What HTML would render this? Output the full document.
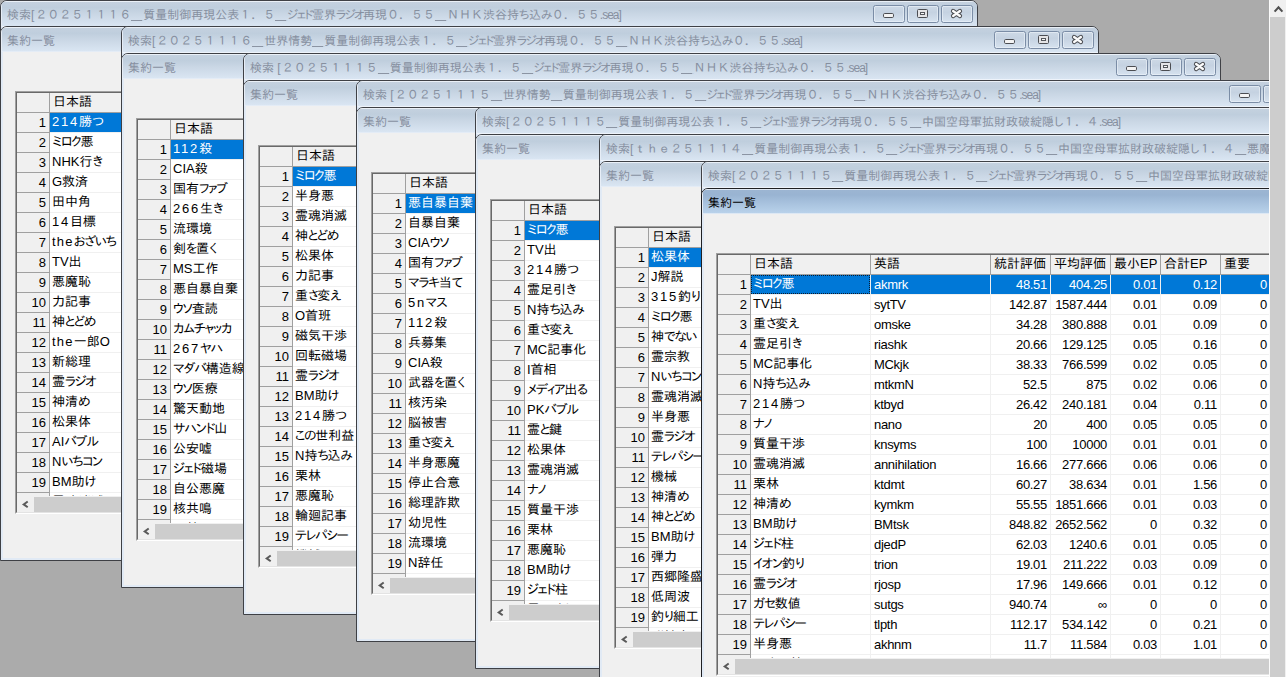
<!DOCTYPE html>
<html lang="ja"><head><meta charset="utf-8"><title>検索</title>
<style>
html,body{margin:0;padding:0}
body{width:1286px;height:677px;overflow:hidden;position:relative;background:#ababab;
 font-family:"Liberation Sans","IPAPGothic","IPAGothic",sans-serif;font-size:13px;color:#000}
i{font-style:normal}
.ot,.iw{position:absolute;box-sizing:border-box;width:978px;border:1px solid #3f4146;border-radius:7px 7px 0 0;overflow:hidden}
.ot{height:40px;background:#dbe6f3}
.iw{height:535px;background:#f0f0f0;border-color:#3e4045}
.iw.act{border-color:#1f2023}
.tb{position:absolute;left:0;top:0;right:0;height:26px;box-sizing:border-box;border-top:1px solid #eaf0f7;border-left:1px solid #e6edf6;
 background:linear-gradient(#c4d1df 0%,#bfcedd 22%,#cad7e5 50%,#d9e5f2 96%,#eef3fa 97%,#eef3fa 100%)}
.iw .tb{height:25px;background:linear-gradient(#c4d1df 0%,#bfcedd 22%,#cad7e5 50%,#d9e5f2 95%,#e4ecf6 96%,#e4ecf6 100%)}
.iw.act .tb{border-top-color:#dfe8f3;background:linear-gradient(#9cb5d2 0%,#99b4d2 20%,#a8c2de 55%,#b8d1ea 95%,#dde8f4 96%,#dde8f4 100%)}
.tt{position:absolute;left:6px;top:6px;font-size:12px;line-height:15px;white-space:nowrap;color:#868f9f}
.iw .tt{left:6px;top:7px}
.iw.act .tt{color:#000}
.fr{position:absolute;left:0;top:25px;right:0;bottom:0;border:2px solid #e1eaf5;border-top:0;pointer-events:none}
.bt{position:absolute;top:4px;width:32px;height:18px;box-sizing:border-box;border:1px solid #7b8da6;border-radius:2.5px;
 background:linear-gradient(#cdd9e6,#c5d2e1 40%,#d6e2ef);box-shadow:inset 0 0 0 1px rgba(240,245,251,.55)}
.ic{position:absolute}
.gd{position:absolute;left:14px;top:64px;width:948px;height:423px;box-sizing:border-box;border:1px solid;border-color:#a0a0a0 #fff #fff #a0a0a0;background:#fff}
.gi{position:absolute;left:0;top:0;right:0;bottom:0;border:1px solid;border-color:#696969 #e3e3e3 #e3e3e3 #696969;overflow:hidden}
.r{position:absolute;left:0;height:20px;width:1400px;white-space:nowrap}
.c{position:absolute;top:0;height:19px;line-height:19px;box-sizing:content-box;border-right:1px solid #f0f0f0;border-bottom:1px solid #f0f0f0;overflow:hidden;white-space:nowrap;background:#fff}
.c.h,.c.n{background:#f0f0f0;border-color:#a0a0a0}
.c.n{left:0;width:29px;padding-right:3px;text-align:right}
.c.j{padding-left:2px;line-height:17px}
.c.h{padding-left:3px;line-height:17px}
.c.n.h{padding-left:0}
.c.e{padding-left:3px;letter-spacing:-.3px}
.c.v{text-align:right;padding-right:3px;letter-spacing:-.3px}
.sel .c.j,.sel .c.e,.sel .c.v{background:#0078d7;color:#fff}
.foc{position:absolute;left:0;top:0;right:0;bottom:0;border:1px dotted #0a1c30}
.d{letter-spacing:1.8px}
.l{letter-spacing:1.2px}
.k{font-family:"IPAPGothic","IPAGothic",sans-serif;letter-spacing:-1.2px}
.g{font-family:"IPAPGothic","IPAGothic",sans-serif;letter-spacing:-1.3px}
.tt{font-family:"Liberation Sans","IPAGothic",sans-serif}
.tk{font-family:"IPAPGothic","IPAGothic",sans-serif;letter-spacing:-1.5px}
.tg{font-family:"IPAPGothic","IPAGothic",sans-serif;letter-spacing:-.5px}
.tl{letter-spacing:-1px}
.tb2{margin-right:1px}
.u{background:linear-gradient(#8d96a5,#8d96a5) no-repeat 0 12px/11px 1px}
.sb{position:absolute;left:0;right:0;bottom:0;height:16px;background:#f0f0f0}
.th{position:absolute;left:17px;top:1px;right:0;height:15px;background:#cdcdcd}
.ar{position:absolute;left:4px;top:3px}
.vs{position:absolute;left:1269px;top:0;width:17px;height:677px;background:#f0f0f0;border-left:1px solid #fbfbfb;box-sizing:border-box}
.vt{position:absolute;left:0;top:17px;width:15px;height:660px;background:#cdcdcd}
</style></head><body>
<div class="ot" style="left:0px;top:0px"><div class="tb"></div><div class="tt">検索<i class="tb2">[</i>２０２５１１１６<i class="u">＿</i>質量制御再現公表１．５<i class="u">＿</i><i class="tk">ジェド</i>霊界<i class="tk">ラジオ</i>再現０．５５<i class="u">＿</i>ＮＨＫ渋谷持<i class="tg">ち</i>込<i class="tg">み</i>０．５５<i class="tl">.sea]</i></div><div class="bt" style="left:872px"><svg class="ic" style="left:8px;top:6px" width="13" height="7" viewBox="0 0 13 7"><rect x="1.5" y="1.5" width="10" height="4" rx="1.2" fill="#f4f4f4" stroke="#4b4d52"/></svg></div><div class="bt" style="left:906px"><svg class="ic" style="left:8px;top:2px" width="13" height="11" viewBox="0 0 13 11"><rect x="1.5" y="1.5" width="10" height="8" rx="1" fill="#e4e4e6" stroke="#4b4d52"/><rect x="4.5" y="4.5" width="4" height="2" fill="#f6f6f6" stroke="#55575c"/></svg></div><div class="bt" style="left:940px"><svg class="ic" style="left:8px;top:2px" width="13" height="11" viewBox="0 0 13 11"><path d="M3.1 3.1 L9.9 7.9 M9.9 3.1 L3.1 7.9" stroke="#4b4d52" stroke-width="4.4" stroke-linecap="round"/><path d="M3.1 3.1 L9.9 7.9 M9.9 3.1 L3.1 7.9" stroke="#fbfbfb" stroke-width="2.4" stroke-linecap="round"/></svg></div></div>
<div class="iw" style="left:0px;top:26px"><div class="tb"></div><div class="tt">集約一覧</div><div class="fr"></div><div class="gd"><div class="gi"><div class="r" style="top:0"><div class="c n h"></div><div class="c h" style="left:33px;width:116px">日本語</div></div><div class="r sel" style="top:20px"><div class="c n">1</div><div class="c j" style="left:33px;width:117px"><i class="d">214</i>勝<i class="g">つ</i></div></div><div class="r" style="top:40px"><div class="c n">2</div><div class="c j" style="left:33px;width:117px"><i class="k">ミロク</i>悪</div></div><div class="r" style="top:60px"><div class="c n">3</div><div class="c j" style="left:33px;width:117px">NHK行<i class="g">き</i></div></div><div class="r" style="top:80px"><div class="c n">4</div><div class="c j" style="left:33px;width:117px">G救済</div></div><div class="r" style="top:100px"><div class="c n">5</div><div class="c j" style="left:33px;width:117px">田中角</div></div><div class="r" style="top:120px"><div class="c n">6</div><div class="c j" style="left:33px;width:117px"><i class="d">14</i>目標</div></div><div class="r" style="top:140px"><div class="c n">7</div><div class="c j" style="left:33px;width:117px"><i class="l">the</i><i class="g">おざいち</i></div></div><div class="r" style="top:160px"><div class="c n">8</div><div class="c j" style="left:33px;width:117px">TV出</div></div><div class="r" style="top:180px"><div class="c n">9</div><div class="c j" style="left:33px;width:117px">悪魔恥</div></div><div class="r" style="top:200px"><div class="c n">10</div><div class="c j" style="left:33px;width:117px">力記事</div></div><div class="r" style="top:220px"><div class="c n">11</div><div class="c j" style="left:33px;width:117px">神<i class="g">とどめ</i></div></div><div class="r" style="top:240px"><div class="c n">12</div><div class="c j" style="left:33px;width:117px"><i class="l">the</i>一郎O</div></div><div class="r" style="top:260px"><div class="c n">13</div><div class="c j" style="left:33px;width:117px">新総理</div></div><div class="r" style="top:280px"><div class="c n">14</div><div class="c j" style="left:33px;width:117px">霊<i class="k">ラジオ</i></div></div><div class="r" style="top:300px"><div class="c n">15</div><div class="c j" style="left:33px;width:117px">神清<i class="g">め</i></div></div><div class="r" style="top:320px"><div class="c n">16</div><div class="c j" style="left:33px;width:117px">松果体</div></div><div class="r" style="top:340px"><div class="c n">17</div><div class="c j" style="left:33px;width:117px">AI<i class="k">バブル</i></div></div><div class="r" style="top:360px"><div class="c n">18</div><div class="c j" style="left:33px;width:117px">N<i class="g">いち</i><i class="k">コン</i></div></div><div class="r" style="top:380px"><div class="c n">19</div><div class="c j" style="left:33px;width:117px">BM助<i class="g">け</i></div></div><div class="r" style="top:400px"><div class="c n">20</div><div class="c j" style="left:33px;width:117px">霊魂消滅</div></div><div class="sb"><svg class="ar" width="9" height="10" viewBox="0 0 9 10"><path d="M6.7 2.5 L2.7 5.4 L6.7 8.3" fill="none" stroke="#5a5a5a" stroke-width="2"/></svg><div class="th"></div></div></div></div></div>
<div class="ot" style="left:121px;top:26px"><div class="tb"></div><div class="tt">検索<i class="tb2">[</i>２０２５１１１６<i class="u">＿</i>世界情勢<i class="u">＿</i>質量制御再現公表１．５<i class="u">＿</i><i class="tk">ジェド</i>霊界<i class="tk">ラジオ</i>再現０．５５<i class="u">＿</i>ＮＨＫ渋谷持<i class="tg">ち</i>込<i class="tg">み</i>０．５５<i class="tl">.sea]</i></div><div class="bt" style="left:872px"><svg class="ic" style="left:8px;top:6px" width="13" height="7" viewBox="0 0 13 7"><rect x="1.5" y="1.5" width="10" height="4" rx="1.2" fill="#f4f4f4" stroke="#4b4d52"/></svg></div><div class="bt" style="left:906px"><svg class="ic" style="left:8px;top:2px" width="13" height="11" viewBox="0 0 13 11"><rect x="1.5" y="1.5" width="10" height="8" rx="1" fill="#e4e4e6" stroke="#4b4d52"/><rect x="4.5" y="4.5" width="4" height="2" fill="#f6f6f6" stroke="#55575c"/></svg></div><div class="bt" style="left:940px"><svg class="ic" style="left:8px;top:2px" width="13" height="11" viewBox="0 0 13 11"><path d="M3.1 3.1 L9.9 7.9 M9.9 3.1 L3.1 7.9" stroke="#4b4d52" stroke-width="4.4" stroke-linecap="round"/><path d="M3.1 3.1 L9.9 7.9 M9.9 3.1 L3.1 7.9" stroke="#fbfbfb" stroke-width="2.4" stroke-linecap="round"/></svg></div></div>
<div class="iw" style="left:121px;top:53px"><div class="tb"></div><div class="tt">集約一覧</div><div class="fr"></div><div class="gd"><div class="gi"><div class="r" style="top:0"><div class="c n h"></div><div class="c h" style="left:33px;width:116px">日本語</div></div><div class="r sel" style="top:20px"><div class="c n">1</div><div class="c j" style="left:33px;width:117px"><i class="d">112</i>殺</div></div><div class="r" style="top:40px"><div class="c n">2</div><div class="c j" style="left:33px;width:117px">CIA殺</div></div><div class="r" style="top:60px"><div class="c n">3</div><div class="c j" style="left:33px;width:117px">国有<i class="k">ファブ</i></div></div><div class="r" style="top:80px"><div class="c n">4</div><div class="c j" style="left:33px;width:117px"><i class="d">266</i>生<i class="g">き</i></div></div><div class="r" style="top:100px"><div class="c n">5</div><div class="c j" style="left:33px;width:117px">流環境</div></div><div class="r" style="top:120px"><div class="c n">6</div><div class="c j" style="left:33px;width:117px">剣<i class="g">を</i>置<i class="g">く</i></div></div><div class="r" style="top:140px"><div class="c n">7</div><div class="c j" style="left:33px;width:117px">MS工作</div></div><div class="r" style="top:160px"><div class="c n">8</div><div class="c j" style="left:33px;width:117px">悪自暴自棄</div></div><div class="r" style="top:180px"><div class="c n">9</div><div class="c j" style="left:33px;width:117px"><i class="k">ウソ</i>査読</div></div><div class="r" style="top:200px"><div class="c n">10</div><div class="c j" style="left:33px;width:117px"><i class="k">カムチャッカ</i></div></div><div class="r" style="top:220px"><div class="c n">11</div><div class="c j" style="left:33px;width:117px"><i class="d">267</i><i class="k">ヤハ</i></div></div><div class="r" style="top:240px"><div class="c n">12</div><div class="c j" style="left:33px;width:117px"><i class="k">マダバ</i>構造線</div></div><div class="r" style="top:260px"><div class="c n">13</div><div class="c j" style="left:33px;width:117px"><i class="k">ウソ</i>医療</div></div><div class="r" style="top:280px"><div class="c n">14</div><div class="c j" style="left:33px;width:117px">驚天動地</div></div><div class="r" style="top:300px"><div class="c n">15</div><div class="c j" style="left:33px;width:117px"><i class="k">サハンド</i>山</div></div><div class="r" style="top:320px"><div class="c n">16</div><div class="c j" style="left:33px;width:117px">公安嘘</div></div><div class="r" style="top:340px"><div class="c n">17</div><div class="c j" style="left:33px;width:117px"><i class="k">ジェド</i>磁場</div></div><div class="r" style="top:360px"><div class="c n">18</div><div class="c j" style="left:33px;width:117px">自公悪魔</div></div><div class="r" style="top:380px"><div class="c n">19</div><div class="c j" style="left:33px;width:117px">核共鳴</div></div><div class="r" style="top:400px"><div class="c n">20</div><div class="c j" style="left:33px;width:117px">栗林</div></div><div class="sb"><svg class="ar" width="9" height="10" viewBox="0 0 9 10"><path d="M6.7 2.5 L2.7 5.4 L6.7 8.3" fill="none" stroke="#5a5a5a" stroke-width="2"/></svg><div class="th"></div></div></div></div></div>
<div class="ot" style="left:243px;top:53px"><div class="tb"></div><div class="tt">検索 <i class="tb2">[</i>２０２５１１１５<i class="u">＿</i>質量制御再現公表１．５<i class="u">＿</i><i class="tk">ジェド</i>霊界<i class="tk">ラジオ</i>再現０．５５<i class="u">＿</i>ＮＨＫ渋谷持<i class="tg">ち</i>込<i class="tg">み</i>０．５５<i class="tl">.sea]</i></div><div class="bt" style="left:872px"><svg class="ic" style="left:8px;top:6px" width="13" height="7" viewBox="0 0 13 7"><rect x="1.5" y="1.5" width="10" height="4" rx="1.2" fill="#f4f4f4" stroke="#4b4d52"/></svg></div><div class="bt" style="left:906px"><svg class="ic" style="left:8px;top:2px" width="13" height="11" viewBox="0 0 13 11"><rect x="1.5" y="1.5" width="10" height="8" rx="1" fill="#e4e4e6" stroke="#4b4d52"/><rect x="4.5" y="4.5" width="4" height="2" fill="#f6f6f6" stroke="#55575c"/></svg></div><div class="bt" style="left:940px"><svg class="ic" style="left:8px;top:2px" width="13" height="11" viewBox="0 0 13 11"><path d="M3.1 3.1 L9.9 7.9 M9.9 3.1 L3.1 7.9" stroke="#4b4d52" stroke-width="4.4" stroke-linecap="round"/><path d="M3.1 3.1 L9.9 7.9 M9.9 3.1 L3.1 7.9" stroke="#fbfbfb" stroke-width="2.4" stroke-linecap="round"/></svg></div></div>
<div class="iw" style="left:243px;top:80px"><div class="tb"></div><div class="tt">集約一覧</div><div class="fr"></div><div class="gd"><div class="gi"><div class="r" style="top:0"><div class="c n h"></div><div class="c h" style="left:33px;width:116px">日本語</div></div><div class="r sel" style="top:20px"><div class="c n">1</div><div class="c j" style="left:33px;width:117px"><i class="k">ミロク</i>悪</div></div><div class="r" style="top:40px"><div class="c n">2</div><div class="c j" style="left:33px;width:117px">半身悪</div></div><div class="r" style="top:60px"><div class="c n">3</div><div class="c j" style="left:33px;width:117px">霊魂消滅</div></div><div class="r" style="top:80px"><div class="c n">4</div><div class="c j" style="left:33px;width:117px">神<i class="g">とどめ</i></div></div><div class="r" style="top:100px"><div class="c n">5</div><div class="c j" style="left:33px;width:117px">松果体</div></div><div class="r" style="top:120px"><div class="c n">6</div><div class="c j" style="left:33px;width:117px">力記事</div></div><div class="r" style="top:140px"><div class="c n">7</div><div class="c j" style="left:33px;width:117px">重<i class="g">さ</i>変<i class="g">え</i></div></div><div class="r" style="top:160px"><div class="c n">8</div><div class="c j" style="left:33px;width:117px">O首班</div></div><div class="r" style="top:180px"><div class="c n">9</div><div class="c j" style="left:33px;width:117px">磁気干渉</div></div><div class="r" style="top:200px"><div class="c n">10</div><div class="c j" style="left:33px;width:117px">回転磁場</div></div><div class="r" style="top:220px"><div class="c n">11</div><div class="c j" style="left:33px;width:117px">霊<i class="k">ラジオ</i></div></div><div class="r" style="top:240px"><div class="c n">12</div><div class="c j" style="left:33px;width:117px">BM助<i class="g">け</i></div></div><div class="r" style="top:260px"><div class="c n">13</div><div class="c j" style="left:33px;width:117px"><i class="d">214</i>勝<i class="g">つ</i></div></div><div class="r" style="top:280px"><div class="c n">14</div><div class="c j" style="left:33px;width:117px"><i class="g">この</i>世利益</div></div><div class="r" style="top:300px"><div class="c n">15</div><div class="c j" style="left:33px;width:117px">N持<i class="g">ち</i>込<i class="g">み</i></div></div><div class="r" style="top:320px"><div class="c n">16</div><div class="c j" style="left:33px;width:117px">栗林</div></div><div class="r" style="top:340px"><div class="c n">17</div><div class="c j" style="left:33px;width:117px">悪魔恥</div></div><div class="r" style="top:360px"><div class="c n">18</div><div class="c j" style="left:33px;width:117px">輪廻記事</div></div><div class="r" style="top:380px"><div class="c n">19</div><div class="c j" style="left:33px;width:117px"><i class="k">テレパシー</i></div></div><div class="r" style="top:400px"><div class="c n">20</div><div class="c j" style="left:33px;width:117px">機械</div></div><div class="sb"><svg class="ar" width="9" height="10" viewBox="0 0 9 10"><path d="M6.7 2.5 L2.7 5.4 L6.7 8.3" fill="none" stroke="#5a5a5a" stroke-width="2"/></svg><div class="th"></div></div></div></div></div>
<div class="ot" style="left:356px;top:80px"><div class="tb"></div><div class="tt">検索 <i class="tb2">[</i>２０２５１１１５<i class="u">＿</i>世界情勢<i class="u">＿</i>質量制御再現公表１．５<i class="u">＿</i><i class="tk">ジェド</i>霊界<i class="tk">ラジオ</i>再現０．５５<i class="u">＿</i>ＮＨＫ渋谷持<i class="tg">ち</i>込<i class="tg">み</i>０．５５<i class="tl">.sea]</i></div><div class="bt" style="left:872px"><svg class="ic" style="left:8px;top:6px" width="13" height="7" viewBox="0 0 13 7"><rect x="1.5" y="1.5" width="10" height="4" rx="1.2" fill="#f4f4f4" stroke="#4b4d52"/></svg></div><div class="bt" style="left:906px"><svg class="ic" style="left:8px;top:2px" width="13" height="11" viewBox="0 0 13 11"><rect x="1.5" y="1.5" width="10" height="8" rx="1" fill="#e4e4e6" stroke="#4b4d52"/><rect x="4.5" y="4.5" width="4" height="2" fill="#f6f6f6" stroke="#55575c"/></svg></div><div class="bt" style="left:940px"><svg class="ic" style="left:8px;top:2px" width="13" height="11" viewBox="0 0 13 11"><path d="M3.1 3.1 L9.9 7.9 M9.9 3.1 L3.1 7.9" stroke="#4b4d52" stroke-width="4.4" stroke-linecap="round"/><path d="M3.1 3.1 L9.9 7.9 M9.9 3.1 L3.1 7.9" stroke="#fbfbfb" stroke-width="2.4" stroke-linecap="round"/></svg></div></div>
<div class="iw" style="left:356px;top:107px"><div class="tb"></div><div class="tt">集約一覧</div><div class="fr"></div><div class="gd"><div class="gi"><div class="r" style="top:0"><div class="c n h"></div><div class="c h" style="left:33px;width:116px">日本語</div></div><div class="r sel" style="top:20px"><div class="c n">1</div><div class="c j" style="left:33px;width:117px">悪自暴自棄</div></div><div class="r" style="top:40px"><div class="c n">2</div><div class="c j" style="left:33px;width:117px">自暴自棄</div></div><div class="r" style="top:60px"><div class="c n">3</div><div class="c j" style="left:33px;width:117px">CIA<i class="k">ウソ</i></div></div><div class="r" style="top:80px"><div class="c n">4</div><div class="c j" style="left:33px;width:117px">国有<i class="k">ファブ</i></div></div><div class="r" style="top:100px"><div class="c n">5</div><div class="c j" style="left:33px;width:117px"><i class="k">マラキ</i>当<i class="g">て</i></div></div><div class="r" style="top:120px"><div class="c n">6</div><div class="c j" style="left:33px;width:117px"><i class="d">5</i><i class="l">n</i><i class="k">マス</i></div></div><div class="r" style="top:140px"><div class="c n">7</div><div class="c j" style="left:33px;width:117px"><i class="d">112</i>殺</div></div><div class="r" style="top:160px"><div class="c n">8</div><div class="c j" style="left:33px;width:117px">兵募集</div></div><div class="r" style="top:180px"><div class="c n">9</div><div class="c j" style="left:33px;width:117px">CIA殺</div></div><div class="r" style="top:200px"><div class="c n">10</div><div class="c j" style="left:33px;width:117px">武器<i class="g">を</i>置<i class="g">く</i></div></div><div class="r" style="top:220px"><div class="c n">11</div><div class="c j" style="left:33px;width:117px">核汚染</div></div><div class="r" style="top:240px"><div class="c n">12</div><div class="c j" style="left:33px;width:117px">脳被害</div></div><div class="r" style="top:260px"><div class="c n">13</div><div class="c j" style="left:33px;width:117px">重<i class="g">さ</i>変<i class="g">え</i></div></div><div class="r" style="top:280px"><div class="c n">14</div><div class="c j" style="left:33px;width:117px">半身悪魔</div></div><div class="r" style="top:300px"><div class="c n">15</div><div class="c j" style="left:33px;width:117px">停止合意</div></div><div class="r" style="top:320px"><div class="c n">16</div><div class="c j" style="left:33px;width:117px">総理詐欺</div></div><div class="r" style="top:340px"><div class="c n">17</div><div class="c j" style="left:33px;width:117px">幼児性</div></div><div class="r" style="top:360px"><div class="c n">18</div><div class="c j" style="left:33px;width:117px">流環境</div></div><div class="r" style="top:380px"><div class="c n">19</div><div class="c j" style="left:33px;width:117px">N辞任</div></div><div class="r" style="top:400px"><div class="c n">20</div><div class="c j" style="left:33px;width:117px"></div></div><div class="sb"><svg class="ar" width="9" height="10" viewBox="0 0 9 10"><path d="M6.7 2.5 L2.7 5.4 L6.7 8.3" fill="none" stroke="#5a5a5a" stroke-width="2"/></svg><div class="th"></div></div></div></div></div>
<div class="ot" style="left:475px;top:107px"><div class="tb"></div><div class="tt">検索<i class="tb2">[</i>２０２５１１１５<i class="u">＿</i>質量制御再現公表１．５<i class="u">＿</i><i class="tk">ジェド</i>霊界<i class="tk">ラジオ</i>再現０．５５<i class="u">＿</i>中国空母軍拡財政破綻隠<i class="tg">し</i>１．４<i class="tl">.sea]</i></div><div class="bt" style="left:872px"><svg class="ic" style="left:8px;top:6px" width="13" height="7" viewBox="0 0 13 7"><rect x="1.5" y="1.5" width="10" height="4" rx="1.2" fill="#f4f4f4" stroke="#4b4d52"/></svg></div><div class="bt" style="left:906px"><svg class="ic" style="left:8px;top:2px" width="13" height="11" viewBox="0 0 13 11"><rect x="1.5" y="1.5" width="10" height="8" rx="1" fill="#e4e4e6" stroke="#4b4d52"/><rect x="4.5" y="4.5" width="4" height="2" fill="#f6f6f6" stroke="#55575c"/></svg></div><div class="bt" style="left:940px"><svg class="ic" style="left:8px;top:2px" width="13" height="11" viewBox="0 0 13 11"><path d="M3.1 3.1 L9.9 7.9 M9.9 3.1 L3.1 7.9" stroke="#4b4d52" stroke-width="4.4" stroke-linecap="round"/><path d="M3.1 3.1 L9.9 7.9 M9.9 3.1 L3.1 7.9" stroke="#fbfbfb" stroke-width="2.4" stroke-linecap="round"/></svg></div></div>
<div class="iw" style="left:475px;top:134px"><div class="tb"></div><div class="tt">集約一覧</div><div class="fr"></div><div class="gd"><div class="gi"><div class="r" style="top:0"><div class="c n h"></div><div class="c h" style="left:33px;width:116px">日本語</div></div><div class="r sel" style="top:20px"><div class="c n">1</div><div class="c j" style="left:33px;width:117px"><i class="k">ミロク</i>悪</div></div><div class="r" style="top:40px"><div class="c n">2</div><div class="c j" style="left:33px;width:117px">TV出</div></div><div class="r" style="top:60px"><div class="c n">3</div><div class="c j" style="left:33px;width:117px"><i class="d">214</i>勝<i class="g">つ</i></div></div><div class="r" style="top:80px"><div class="c n">4</div><div class="c j" style="left:33px;width:117px">霊足引<i class="g">き</i></div></div><div class="r" style="top:100px"><div class="c n">5</div><div class="c j" style="left:33px;width:117px">N持<i class="g">ち</i>込<i class="g">み</i></div></div><div class="r" style="top:120px"><div class="c n">6</div><div class="c j" style="left:33px;width:117px">重<i class="g">さ</i>変<i class="g">え</i></div></div><div class="r" style="top:140px"><div class="c n">7</div><div class="c j" style="left:33px;width:117px">MC記事化</div></div><div class="r" style="top:160px"><div class="c n">8</div><div class="c j" style="left:33px;width:117px">I首相</div></div><div class="r" style="top:180px"><div class="c n">9</div><div class="c j" style="left:33px;width:117px"><i class="k">メディア</i>出<i class="g">る</i></div></div><div class="r" style="top:200px"><div class="c n">10</div><div class="c j" style="left:33px;width:117px">PK<i class="k">バブル</i></div></div><div class="r" style="top:220px"><div class="c n">11</div><div class="c j" style="left:33px;width:117px">霊<i class="g">と</i>鍵</div></div><div class="r" style="top:240px"><div class="c n">12</div><div class="c j" style="left:33px;width:117px">松果体</div></div><div class="r" style="top:260px"><div class="c n">13</div><div class="c j" style="left:33px;width:117px">霊魂消滅</div></div><div class="r" style="top:280px"><div class="c n">14</div><div class="c j" style="left:33px;width:117px"><i class="k">ナノ</i></div></div><div class="r" style="top:300px"><div class="c n">15</div><div class="c j" style="left:33px;width:117px">質量干渉</div></div><div class="r" style="top:320px"><div class="c n">16</div><div class="c j" style="left:33px;width:117px">栗林</div></div><div class="r" style="top:340px"><div class="c n">17</div><div class="c j" style="left:33px;width:117px">悪魔恥</div></div><div class="r" style="top:360px"><div class="c n">18</div><div class="c j" style="left:33px;width:117px">BM助<i class="g">け</i></div></div><div class="r" style="top:380px"><div class="c n">19</div><div class="c j" style="left:33px;width:117px"><i class="k">ジェド</i>柱</div></div><div class="r" style="top:400px"><div class="c n">20</div><div class="c j" style="left:33px;width:117px">霊<i class="k">ラジオ</i></div></div><div class="sb"><svg class="ar" width="9" height="10" viewBox="0 0 9 10"><path d="M6.7 2.5 L2.7 5.4 L6.7 8.3" fill="none" stroke="#5a5a5a" stroke-width="2"/></svg><div class="th"></div></div></div></div></div>
<div class="ot" style="left:599px;top:134px"><div class="tb"></div><div class="tt">検索<i class="tb2">[</i>ｔｈｅ２５１１１４<i class="u">＿</i>質量制御再現公表１．５<i class="u">＿</i><i class="tk">ジェド</i>霊界<i class="tk">ラジオ</i>再現０．５５<i class="u">＿</i>中国空母軍拡財政破綻隠<i class="tg">し</i>１．４<i class="u">＿</i>悪魔恥<i class="tl">.sea]</i></div><div class="bt" style="left:872px"><svg class="ic" style="left:8px;top:6px" width="13" height="7" viewBox="0 0 13 7"><rect x="1.5" y="1.5" width="10" height="4" rx="1.2" fill="#f4f4f4" stroke="#4b4d52"/></svg></div><div class="bt" style="left:906px"><svg class="ic" style="left:8px;top:2px" width="13" height="11" viewBox="0 0 13 11"><rect x="1.5" y="1.5" width="10" height="8" rx="1" fill="#e4e4e6" stroke="#4b4d52"/><rect x="4.5" y="4.5" width="4" height="2" fill="#f6f6f6" stroke="#55575c"/></svg></div><div class="bt" style="left:940px"><svg class="ic" style="left:8px;top:2px" width="13" height="11" viewBox="0 0 13 11"><path d="M3.1 3.1 L9.9 7.9 M9.9 3.1 L3.1 7.9" stroke="#4b4d52" stroke-width="4.4" stroke-linecap="round"/><path d="M3.1 3.1 L9.9 7.9 M9.9 3.1 L3.1 7.9" stroke="#fbfbfb" stroke-width="2.4" stroke-linecap="round"/></svg></div></div>
<div class="iw" style="left:599px;top:161px"><div class="tb"></div><div class="tt">集約一覧</div><div class="fr"></div><div class="gd"><div class="gi"><div class="r" style="top:0"><div class="c n h"></div><div class="c h" style="left:33px;width:116px">日本語</div></div><div class="r sel" style="top:20px"><div class="c n">1</div><div class="c j" style="left:33px;width:117px">松果体</div></div><div class="r" style="top:40px"><div class="c n">2</div><div class="c j" style="left:33px;width:117px">J解説</div></div><div class="r" style="top:60px"><div class="c n">3</div><div class="c j" style="left:33px;width:117px"><i class="d">315</i>釣<i class="g">り</i></div></div><div class="r" style="top:80px"><div class="c n">4</div><div class="c j" style="left:33px;width:117px"><i class="k">ミロク</i>悪</div></div><div class="r" style="top:100px"><div class="c n">5</div><div class="c j" style="left:33px;width:117px">神<i class="g">でない</i></div></div><div class="r" style="top:120px"><div class="c n">6</div><div class="c j" style="left:33px;width:117px">霊宗教</div></div><div class="r" style="top:140px"><div class="c n">7</div><div class="c j" style="left:33px;width:117px">N<i class="g">いち</i><i class="k">コン</i></div></div><div class="r" style="top:160px"><div class="c n">8</div><div class="c j" style="left:33px;width:117px">霊魂消滅</div></div><div class="r" style="top:180px"><div class="c n">9</div><div class="c j" style="left:33px;width:117px">半身悪</div></div><div class="r" style="top:200px"><div class="c n">10</div><div class="c j" style="left:33px;width:117px">霊<i class="k">ラジオ</i></div></div><div class="r" style="top:220px"><div class="c n">11</div><div class="c j" style="left:33px;width:117px"><i class="k">テレパシー</i></div></div><div class="r" style="top:240px"><div class="c n">12</div><div class="c j" style="left:33px;width:117px">機械</div></div><div class="r" style="top:260px"><div class="c n">13</div><div class="c j" style="left:33px;width:117px">神清<i class="g">め</i></div></div><div class="r" style="top:280px"><div class="c n">14</div><div class="c j" style="left:33px;width:117px">神<i class="g">とどめ</i></div></div><div class="r" style="top:300px"><div class="c n">15</div><div class="c j" style="left:33px;width:117px">BM助<i class="g">け</i></div></div><div class="r" style="top:320px"><div class="c n">16</div><div class="c j" style="left:33px;width:117px">弾力</div></div><div class="r" style="top:340px"><div class="c n">17</div><div class="c j" style="left:33px;width:117px">西郷隆盛</div></div><div class="r" style="top:360px"><div class="c n">18</div><div class="c j" style="left:33px;width:117px">低周波</div></div><div class="r" style="top:380px"><div class="c n">19</div><div class="c j" style="left:33px;width:117px">釣<i class="g">り</i>細工</div></div><div class="r" style="top:400px"><div class="c n">20</div><div class="c j" style="left:33px;width:117px">脳被害</div></div><div class="sb"><svg class="ar" width="9" height="10" viewBox="0 0 9 10"><path d="M6.7 2.5 L2.7 5.4 L6.7 8.3" fill="none" stroke="#5a5a5a" stroke-width="2"/></svg><div class="th"></div></div></div></div></div>
<div class="ot" style="left:701px;top:161px"><div class="tb"></div><div class="tt">検索<i class="tb2">[</i>２０２５１１１５<i class="u">＿</i>質量制御再現公表１．５<i class="u">＿</i><i class="tk">ジェド</i>霊界<i class="tk">ラジオ</i>再現０．５５<i class="u">＿</i>中国空母軍拡財政破綻隠<i class="tg">し</i>１．４<i class="tl">.sea]</i></div><div class="bt" style="left:872px"><svg class="ic" style="left:8px;top:6px" width="13" height="7" viewBox="0 0 13 7"><rect x="1.5" y="1.5" width="10" height="4" rx="1.2" fill="#f4f4f4" stroke="#4b4d52"/></svg></div><div class="bt" style="left:906px"><svg class="ic" style="left:8px;top:2px" width="13" height="11" viewBox="0 0 13 11"><rect x="1.5" y="1.5" width="10" height="8" rx="1" fill="#e4e4e6" stroke="#4b4d52"/><rect x="4.5" y="4.5" width="4" height="2" fill="#f6f6f6" stroke="#55575c"/></svg></div><div class="bt" style="left:940px"><svg class="ic" style="left:8px;top:2px" width="13" height="11" viewBox="0 0 13 11"><path d="M3.1 3.1 L9.9 7.9 M9.9 3.1 L3.1 7.9" stroke="#4b4d52" stroke-width="4.4" stroke-linecap="round"/><path d="M3.1 3.1 L9.9 7.9 M9.9 3.1 L3.1 7.9" stroke="#fbfbfb" stroke-width="2.4" stroke-linecap="round"/></svg></div></div>
<div class="iw act" style="left:701px;top:188px"><div class="tb"></div><div class="tt">集約一覧</div><div class="fr"></div><div class="gd"><div class="gi"><div class="r" style="top:0"><div class="c n h"></div><div class="c h" style="left:33px;width:116px">日本語</div><div class="c h" style="left:153px;width:116px">英語</div><div class="c h" style="left:273px;width:56px">統計評価</div><div class="c h" style="left:333px;width:56px">平均評価</div><div class="c h" style="left:393px;width:46px">最小EP</div><div class="c h" style="left:443px;width:56px">合計EP</div><div class="c h" style="left:503px;width:46px">重要</div></div><div class="r sel" style="top:20px"><div class="c n">1</div><div class="c j" style="left:33px;width:117px"><i class="k">ミロク</i>悪<div class="foc"></div></div><div class="c e" style="left:153px;width:116px">akmrk</div><div class="c v" style="left:273px;width:56px">48.51</div><div class="c v" style="left:333px;width:56px">404.25</div><div class="c v" style="left:393px;width:46px">0.01</div><div class="c v" style="left:443px;width:56px">0.12</div><div class="c v" style="left:503px;width:46px">0</div></div><div class="r" style="top:40px"><div class="c n">2</div><div class="c j" style="left:33px;width:117px">TV出</div><div class="c e" style="left:153px;width:116px">sytTV</div><div class="c v" style="left:273px;width:56px">142.87</div><div class="c v" style="left:333px;width:56px">1587.444</div><div class="c v" style="left:393px;width:46px">0.01</div><div class="c v" style="left:443px;width:56px">0.09</div><div class="c v" style="left:503px;width:46px">0</div></div><div class="r" style="top:60px"><div class="c n">3</div><div class="c j" style="left:33px;width:117px">重<i class="g">さ</i>変<i class="g">え</i></div><div class="c e" style="left:153px;width:116px">omske</div><div class="c v" style="left:273px;width:56px">34.28</div><div class="c v" style="left:333px;width:56px">380.888</div><div class="c v" style="left:393px;width:46px">0.01</div><div class="c v" style="left:443px;width:56px">0.09</div><div class="c v" style="left:503px;width:46px">0</div></div><div class="r" style="top:80px"><div class="c n">4</div><div class="c j" style="left:33px;width:117px">霊足引<i class="g">き</i></div><div class="c e" style="left:153px;width:116px">riashk</div><div class="c v" style="left:273px;width:56px">20.66</div><div class="c v" style="left:333px;width:56px">129.125</div><div class="c v" style="left:393px;width:46px">0.05</div><div class="c v" style="left:443px;width:56px">0.16</div><div class="c v" style="left:503px;width:46px">0</div></div><div class="r" style="top:100px"><div class="c n">5</div><div class="c j" style="left:33px;width:117px">MC記事化</div><div class="c e" style="left:153px;width:116px">MCkjk</div><div class="c v" style="left:273px;width:56px">38.33</div><div class="c v" style="left:333px;width:56px">766.599</div><div class="c v" style="left:393px;width:46px">0.02</div><div class="c v" style="left:443px;width:56px">0.05</div><div class="c v" style="left:503px;width:46px">0</div></div><div class="r" style="top:120px"><div class="c n">6</div><div class="c j" style="left:33px;width:117px">N持<i class="g">ち</i>込<i class="g">み</i></div><div class="c e" style="left:153px;width:116px">mtkmN</div><div class="c v" style="left:273px;width:56px">52.5</div><div class="c v" style="left:333px;width:56px">875</div><div class="c v" style="left:393px;width:46px">0.02</div><div class="c v" style="left:443px;width:56px">0.06</div><div class="c v" style="left:503px;width:46px">0</div></div><div class="r" style="top:140px"><div class="c n">7</div><div class="c j" style="left:33px;width:117px"><i class="d">214</i>勝<i class="g">つ</i></div><div class="c e" style="left:153px;width:116px">ktbyd</div><div class="c v" style="left:273px;width:56px">26.42</div><div class="c v" style="left:333px;width:56px">240.181</div><div class="c v" style="left:393px;width:46px">0.04</div><div class="c v" style="left:443px;width:56px">0.11</div><div class="c v" style="left:503px;width:46px">0</div></div><div class="r" style="top:160px"><div class="c n">8</div><div class="c j" style="left:33px;width:117px"><i class="k">ナノ</i></div><div class="c e" style="left:153px;width:116px">nano</div><div class="c v" style="left:273px;width:56px">20</div><div class="c v" style="left:333px;width:56px">400</div><div class="c v" style="left:393px;width:46px">0.05</div><div class="c v" style="left:443px;width:56px">0.05</div><div class="c v" style="left:503px;width:46px">0</div></div><div class="r" style="top:180px"><div class="c n">9</div><div class="c j" style="left:33px;width:117px">質量干渉</div><div class="c e" style="left:153px;width:116px">knsyms</div><div class="c v" style="left:273px;width:56px">100</div><div class="c v" style="left:333px;width:56px">10000</div><div class="c v" style="left:393px;width:46px">0.01</div><div class="c v" style="left:443px;width:56px">0.01</div><div class="c v" style="left:503px;width:46px">0</div></div><div class="r" style="top:200px"><div class="c n">10</div><div class="c j" style="left:33px;width:117px">霊魂消滅</div><div class="c e" style="left:153px;width:116px">annihilation</div><div class="c v" style="left:273px;width:56px">16.66</div><div class="c v" style="left:333px;width:56px">277.666</div><div class="c v" style="left:393px;width:46px">0.06</div><div class="c v" style="left:443px;width:56px">0.06</div><div class="c v" style="left:503px;width:46px">0</div></div><div class="r" style="top:220px"><div class="c n">11</div><div class="c j" style="left:33px;width:117px">栗林</div><div class="c e" style="left:153px;width:116px">ktdmt</div><div class="c v" style="left:273px;width:56px">60.27</div><div class="c v" style="left:333px;width:56px">38.634</div><div class="c v" style="left:393px;width:46px">0.01</div><div class="c v" style="left:443px;width:56px">1.56</div><div class="c v" style="left:503px;width:46px">0</div></div><div class="r" style="top:240px"><div class="c n">12</div><div class="c j" style="left:33px;width:117px">神清<i class="g">め</i></div><div class="c e" style="left:153px;width:116px">kymkm</div><div class="c v" style="left:273px;width:56px">55.55</div><div class="c v" style="left:333px;width:56px">1851.666</div><div class="c v" style="left:393px;width:46px">0.01</div><div class="c v" style="left:443px;width:56px">0.03</div><div class="c v" style="left:503px;width:46px">0</div></div><div class="r" style="top:260px"><div class="c n">13</div><div class="c j" style="left:33px;width:117px">BM助<i class="g">け</i></div><div class="c e" style="left:153px;width:116px">BMtsk</div><div class="c v" style="left:273px;width:56px">848.82</div><div class="c v" style="left:333px;width:56px">2652.562</div><div class="c v" style="left:393px;width:46px">0</div><div class="c v" style="left:443px;width:56px">0.32</div><div class="c v" style="left:503px;width:46px">0</div></div><div class="r" style="top:280px"><div class="c n">14</div><div class="c j" style="left:33px;width:117px"><i class="k">ジェド</i>柱</div><div class="c e" style="left:153px;width:116px">djedP</div><div class="c v" style="left:273px;width:56px">62.03</div><div class="c v" style="left:333px;width:56px">1240.6</div><div class="c v" style="left:393px;width:46px">0.01</div><div class="c v" style="left:443px;width:56px">0.05</div><div class="c v" style="left:503px;width:46px">0</div></div><div class="r" style="top:300px"><div class="c n">15</div><div class="c j" style="left:33px;width:117px"><i class="k">イオン</i>釣<i class="g">り</i></div><div class="c e" style="left:153px;width:116px">trion</div><div class="c v" style="left:273px;width:56px">19.01</div><div class="c v" style="left:333px;width:56px">211.222</div><div class="c v" style="left:393px;width:46px">0.03</div><div class="c v" style="left:443px;width:56px">0.09</div><div class="c v" style="left:503px;width:46px">0</div></div><div class="r" style="top:320px"><div class="c n">16</div><div class="c j" style="left:33px;width:117px">霊<i class="k">ラジオ</i></div><div class="c e" style="left:153px;width:116px">rjosp</div><div class="c v" style="left:273px;width:56px">17.96</div><div class="c v" style="left:333px;width:56px">149.666</div><div class="c v" style="left:393px;width:46px">0.01</div><div class="c v" style="left:443px;width:56px">0.12</div><div class="c v" style="left:503px;width:46px">0</div></div><div class="r" style="top:340px"><div class="c n">17</div><div class="c j" style="left:33px;width:117px"><i class="k">ガセ</i>数値</div><div class="c e" style="left:153px;width:116px">sutgs</div><div class="c v" style="left:273px;width:56px">940.74</div><div class="c v" style="left:333px;width:56px">∞</div><div class="c v" style="left:393px;width:46px">0</div><div class="c v" style="left:443px;width:56px">0</div><div class="c v" style="left:503px;width:46px">0</div></div><div class="r" style="top:360px"><div class="c n">18</div><div class="c j" style="left:33px;width:117px"><i class="k">テレパシー</i></div><div class="c e" style="left:153px;width:116px">tlpth</div><div class="c v" style="left:273px;width:56px">112.17</div><div class="c v" style="left:333px;width:56px">534.142</div><div class="c v" style="left:393px;width:46px">0</div><div class="c v" style="left:443px;width:56px">0.21</div><div class="c v" style="left:503px;width:46px">0</div></div><div class="r" style="top:380px"><div class="c n">19</div><div class="c j" style="left:33px;width:117px">半身悪</div><div class="c e" style="left:153px;width:116px">akhnm</div><div class="c v" style="left:273px;width:56px">11.7</div><div class="c v" style="left:333px;width:56px">11.584</div><div class="c v" style="left:393px;width:46px">0.03</div><div class="c v" style="left:443px;width:56px">1.01</div><div class="c v" style="left:503px;width:46px">0</div></div><div class="r" style="top:400px"><div class="c n">20</div><div class="c j" style="left:33px;width:117px">弱点<i class="g">の</i>核</div><div class="c e" style="left:153px;width:116px">jktnk</div><div class="c v" style="left:273px;width:56px">33.1</div><div class="c v" style="left:333px;width:56px">120.5</div><div class="c v" style="left:393px;width:46px">0.02</div><div class="c v" style="left:443px;width:56px">0.4</div><div class="c v" style="left:503px;width:46px">0</div></div><div class="sb"><svg class="ar" width="9" height="10" viewBox="0 0 9 10"><path d="M6.7 2.5 L2.7 5.4 L6.7 8.3" fill="none" stroke="#5a5a5a" stroke-width="2"/></svg><div class="th"></div></div></div></div></div>
<div class="vs"><div class="vt"></div><svg style="position:absolute;left:3px;top:4px" width="11" height="10" viewBox="0 0 11 10"><path d="M1.6 7.6 L5.5 3.4 L9.4 7.6" fill="none" stroke="#505050" stroke-width="2.1"/></svg></div>
</body></html>
